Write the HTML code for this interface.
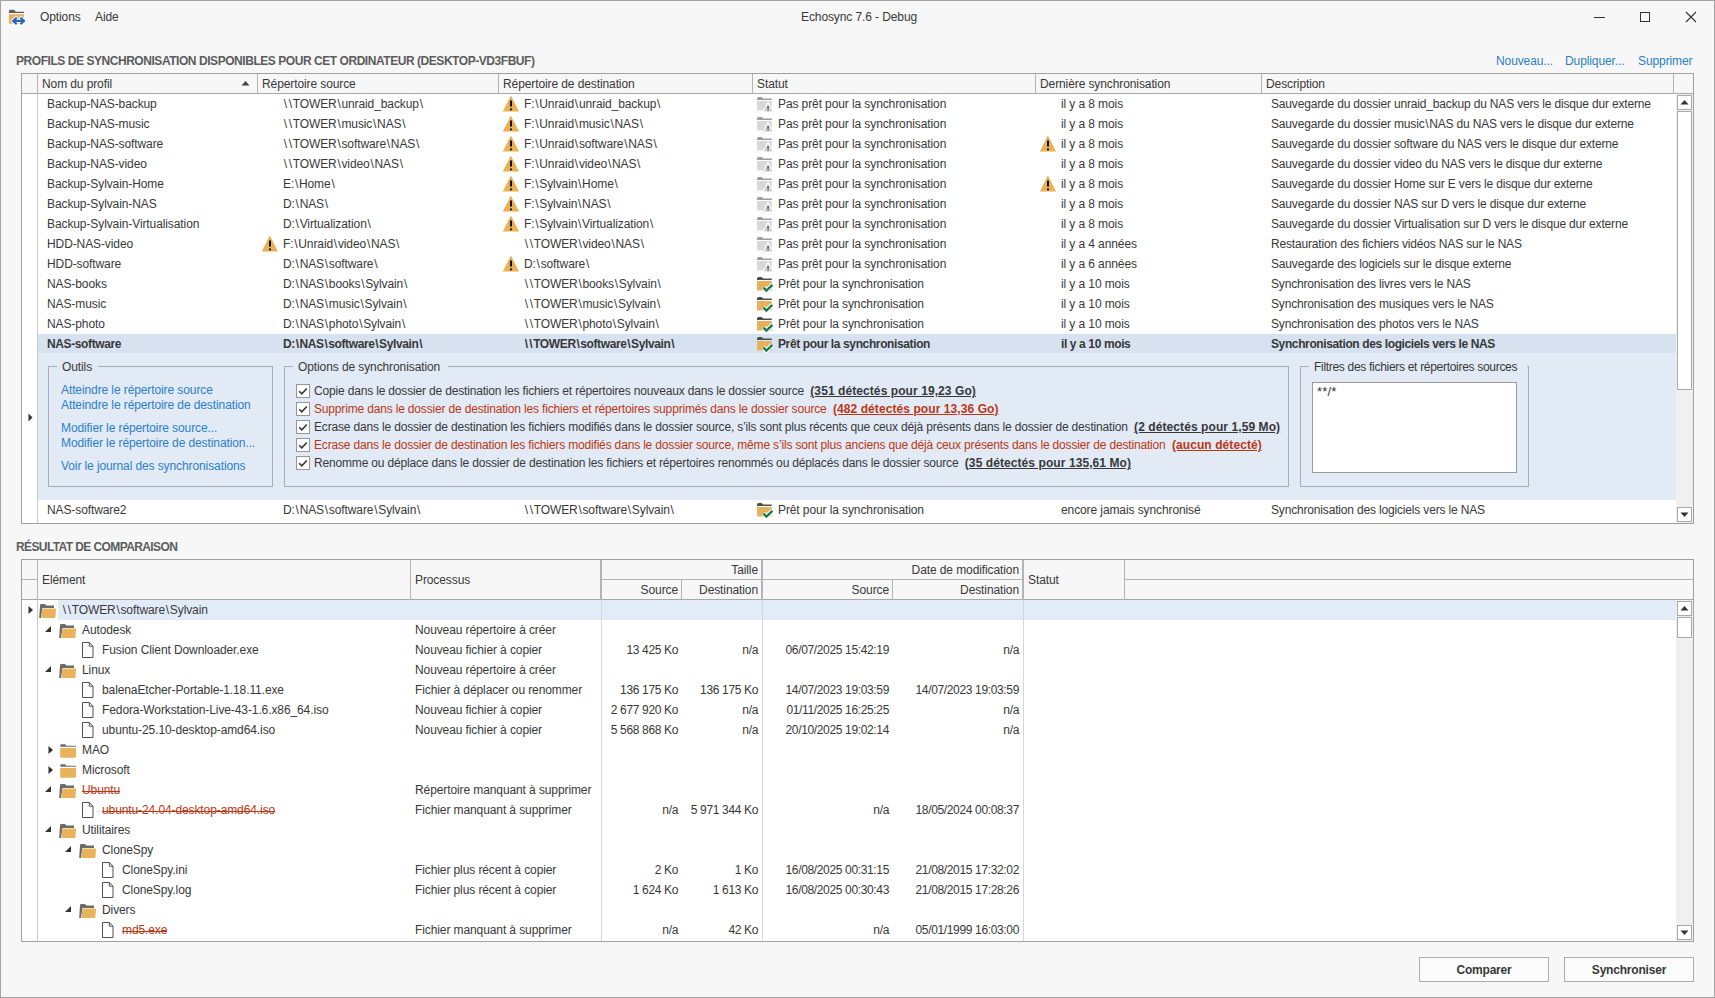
<!DOCTYPE html><html><head><meta charset="utf-8"><style>

html,body{margin:0;padding:0;}
body{width:1715px;height:998px;overflow:hidden;background:#f7f7f7;position:relative;font-family:"Liberation Sans", sans-serif;font-size:12px;color:#383838;}
.t{position:absolute;white-space:nowrap;line-height:20px;height:20px;letter-spacing:-0.1px;}
.r{text-align:right;}
.b{position:absolute;box-sizing:border-box;}
.ic{position:absolute;}
.lk{color:#2a80c6;}
.hd{font-weight:bold;color:#5c5c5c;letter-spacing:-0.45px;}
.hd2{letter-spacing:-0.6px;}
.red{color:#bb3714;}
.bold{font-weight:bold;}
.bs{padding:0 0.8px;}
.desc{letter-spacing:-0.17px;}
.num{letter-spacing:-0.35px;}
.strike{background:linear-gradient(#bb3714,#bb3714) 0 11px/100% 1px no-repeat;}
.ul{text-decoration:underline;font-weight:bold;letter-spacing:0.08px;}

</style></head><body>
<div class="b" style="left:0px;top:0px;width:1715px;height:998px;border:1px solid #a3a3a3;"></div>
<svg class="ic" style="left:8px;top:9px" width="20" height="18" viewBox="0 0 20 18"><path d="M0.9 2.2 Q0.9 0.7 2.4 0.7 h3.4 l2 2 h8.2 v1.3 h-15.1 z" fill="#5e5e5e"/><path d="M0.9 5.2 h15.1 v9.6 h-14.1 q-1 0 -1 -1 z" fill="#e6b25c"/><path d="M8 9.2 L5.3 11.9 L8 14.6 M5.3 11.9 H15.9 M13.2 9.2 L15.9 11.9 L13.2 14.6" fill="none" stroke="#ffffff" stroke-width="4.2" stroke-linecap="round" stroke-linejoin="round"/><path d="M8 9.2 L5.3 11.9 L8 14.6 M5.3 11.9 H15.9 M13.2 9.2 L15.9 11.9 L13.2 14.6" fill="none" stroke="#2763b5" stroke-width="2.1" stroke-linecap="square"/></svg>
<div class="t" style="left:40px;top:7px;">Options</div>
<div class="t" style="left:95px;top:7px;">Aide</div>
<div class="t" style="left:801px;top:7px;">Echosync 7.6 - Debug</div>
<div class="b" style="left:1594px;top:17px;width:11px;height:1px;background:#333;"></div>
<div class="b" style="left:1640px;top:12px;width:10px;height:10px;border:1px solid #333;"></div>
<svg class="ic" style="left:1685px;top:11px" width="12" height="12" viewBox="0 0 12 12"><path d="M1 1 L11 11 M11 1 L1 11" stroke="#333" stroke-width="1.1"/></svg>
<div class="t hd" style="left:16px;top:51px;">PROFILS DE SYNCHRONISATION DISPONIBLES POUR CET ORDINATEUR (DESKTOP-VD3FBUF)</div>
<div class="t lk" style="left:1496px;top:51px;">Nouveau...</div>
<div class="t lk" style="left:1565px;top:51px;">Dupliquer...</div>
<div class="t lk" style="left:1638px;top:51px;">Supprimer</div>
<div class="b" style="left:21px;top:73px;width:1673px;height:451px;border:1px solid #a0a0a0;background:#fff;"></div>
<div class="b" style="left:22px;top:74px;width:1671px;height:20px;background:#f7f7f7;border-bottom:1px solid #a8a8a8;"></div>
<div class="b" style="left:37px;top:74px;width:1px;height:20px;background:#b4b4b4;"></div>
<div class="b" style="left:257px;top:74px;width:1px;height:20px;background:#b4b4b4;"></div>
<div class="b" style="left:498px;top:74px;width:1px;height:20px;background:#b4b4b4;"></div>
<div class="b" style="left:752px;top:74px;width:1px;height:20px;background:#b4b4b4;"></div>
<div class="b" style="left:1035px;top:74px;width:1px;height:20px;background:#b4b4b4;"></div>
<div class="b" style="left:1261px;top:74px;width:1px;height:20px;background:#b4b4b4;"></div>
<div class="b" style="left:1673px;top:74px;width:1px;height:20px;background:#b4b4b4;"></div>
<div class="b" style="left:37px;top:94px;width:1px;height:429px;background:#c8c8c8;"></div>
<div class="t" style="left:42px;top:74px;">Nom du profil</div>
<svg class="ic" style="left:241px;top:80px" width="9" height="6" viewBox="0 0 9 6"><path d="M0.5 5.5 L4.5 1 L8.5 5.5 Z" fill="#444"/></svg>
<div class="t" style="left:262px;top:74px;">Répertoire source</div>
<div class="t" style="left:503px;top:74px;">Répertoire de destination</div>
<div class="t" style="left:757px;top:74px;">Statut</div>
<div class="t" style="left:1040px;top:74px;">Dernière synchronisation</div>
<div class="t" style="left:1266px;top:74px;">Description</div>
<div class="t" style="left:47px;top:94px;">Backup-NAS-backup</div>
<div class="t" style="left:283px;top:94px;"><span class="bs">\</span><span class="bs">\</span>TOWER<span class="bs">\</span>unraid_backup<span class="bs">\</span></div>
<svg class="ic" style="left:502px;top:94px" width="18" height="18" viewBox="0 0 18 18"><path d="M8.8 1.6 L17 17.4 L0.8 17.4 Z" fill="#e9b054"/><rect x="8" y="6.5" width="2" height="6" fill="#111"/><rect x="8" y="14.5" width="2" height="1.8" fill="#111"/></svg>
<div class="t" style="left:524px;top:94px;">F:<span class="bs">\</span>Unraid<span class="bs">\</span>unraid_backup<span class="bs">\</span></div>
<svg class="ic" style="left:756px;top:94px" width="19" height="19" viewBox="0 0 19 19"><path d="M1 4.6 Q1 3 2.6 3 h3 l1.6 1.6 h8.6 v1.3 h-14.8 z" fill="#9c9c9c"/><path d="M1 7 h14.8 v9.4 h-13.6 q-1.2 0 -1.2 -1.2 z" fill="#d8d8d8"/><path d="M12 7.2 L18 18.2 L6 18.2 Z" fill="#ffffff"/><path d="M12 9.4 L16.6 17.5 L7.4 17.5 Z" fill="#d2d2d2"/><rect x="11.3" y="12" width="1.5" height="3" fill="#5a5a5a"/><rect x="11.3" y="15.8" width="1.5" height="1.2" fill="#5a5a5a"/></svg>
<div class="t" style="left:778px;top:94px;">Pas prêt pour la synchronisation</div>
<div class="t" style="left:1061px;top:94px;">il y a 8 mois</div>
<div class="t desc" style="left:1271px;top:94px;">Sauvegarde du dossier unraid_backup du NAS vers le disque dur externe</div>
<div class="t" style="left:47px;top:114px;">Backup-NAS-music</div>
<div class="t" style="left:283px;top:114px;"><span class="bs">\</span><span class="bs">\</span>TOWER<span class="bs">\</span>music<span class="bs">\</span>NAS<span class="bs">\</span></div>
<svg class="ic" style="left:502px;top:114px" width="18" height="18" viewBox="0 0 18 18"><path d="M8.8 1.6 L17 17.4 L0.8 17.4 Z" fill="#e9b054"/><rect x="8" y="6.5" width="2" height="6" fill="#111"/><rect x="8" y="14.5" width="2" height="1.8" fill="#111"/></svg>
<div class="t" style="left:524px;top:114px;">F:<span class="bs">\</span>Unraid<span class="bs">\</span>music<span class="bs">\</span>NAS<span class="bs">\</span></div>
<svg class="ic" style="left:756px;top:114px" width="19" height="19" viewBox="0 0 19 19"><path d="M1 4.6 Q1 3 2.6 3 h3 l1.6 1.6 h8.6 v1.3 h-14.8 z" fill="#9c9c9c"/><path d="M1 7 h14.8 v9.4 h-13.6 q-1.2 0 -1.2 -1.2 z" fill="#d8d8d8"/><path d="M12 7.2 L18 18.2 L6 18.2 Z" fill="#ffffff"/><path d="M12 9.4 L16.6 17.5 L7.4 17.5 Z" fill="#d2d2d2"/><rect x="11.3" y="12" width="1.5" height="3" fill="#5a5a5a"/><rect x="11.3" y="15.8" width="1.5" height="1.2" fill="#5a5a5a"/></svg>
<div class="t" style="left:778px;top:114px;">Pas prêt pour la synchronisation</div>
<div class="t" style="left:1061px;top:114px;">il y a 8 mois</div>
<div class="t desc" style="left:1271px;top:114px;">Sauvegarde du dossier music<span class="bs">\</span>NAS du NAS vers le disque dur externe</div>
<div class="t" style="left:47px;top:134px;">Backup-NAS-software</div>
<div class="t" style="left:283px;top:134px;"><span class="bs">\</span><span class="bs">\</span>TOWER<span class="bs">\</span>software<span class="bs">\</span>NAS<span class="bs">\</span></div>
<svg class="ic" style="left:502px;top:134px" width="18" height="18" viewBox="0 0 18 18"><path d="M8.8 1.6 L17 17.4 L0.8 17.4 Z" fill="#e9b054"/><rect x="8" y="6.5" width="2" height="6" fill="#111"/><rect x="8" y="14.5" width="2" height="1.8" fill="#111"/></svg>
<div class="t" style="left:524px;top:134px;">F:<span class="bs">\</span>Unraid<span class="bs">\</span>software<span class="bs">\</span>NAS<span class="bs">\</span></div>
<svg class="ic" style="left:756px;top:134px" width="19" height="19" viewBox="0 0 19 19"><path d="M1 4.6 Q1 3 2.6 3 h3 l1.6 1.6 h8.6 v1.3 h-14.8 z" fill="#9c9c9c"/><path d="M1 7 h14.8 v9.4 h-13.6 q-1.2 0 -1.2 -1.2 z" fill="#d8d8d8"/><path d="M12 7.2 L18 18.2 L6 18.2 Z" fill="#ffffff"/><path d="M12 9.4 L16.6 17.5 L7.4 17.5 Z" fill="#d2d2d2"/><rect x="11.3" y="12" width="1.5" height="3" fill="#5a5a5a"/><rect x="11.3" y="15.8" width="1.5" height="1.2" fill="#5a5a5a"/></svg>
<div class="t" style="left:778px;top:134px;">Pas prêt pour la synchronisation</div>
<svg class="ic" style="left:1039px;top:134px" width="18" height="18" viewBox="0 0 18 18"><path d="M8.8 1.6 L17 17.4 L0.8 17.4 Z" fill="#e9b054"/><rect x="8" y="6.5" width="2" height="6" fill="#111"/><rect x="8" y="14.5" width="2" height="1.8" fill="#111"/></svg>
<div class="t" style="left:1061px;top:134px;">il y a 8 mois</div>
<div class="t desc" style="left:1271px;top:134px;">Sauvegarde du dossier software du NAS vers le disque dur externe</div>
<div class="t" style="left:47px;top:154px;">Backup-NAS-video</div>
<div class="t" style="left:283px;top:154px;"><span class="bs">\</span><span class="bs">\</span>TOWER<span class="bs">\</span>video<span class="bs">\</span>NAS<span class="bs">\</span></div>
<svg class="ic" style="left:502px;top:154px" width="18" height="18" viewBox="0 0 18 18"><path d="M8.8 1.6 L17 17.4 L0.8 17.4 Z" fill="#e9b054"/><rect x="8" y="6.5" width="2" height="6" fill="#111"/><rect x="8" y="14.5" width="2" height="1.8" fill="#111"/></svg>
<div class="t" style="left:524px;top:154px;">F:<span class="bs">\</span>Unraid<span class="bs">\</span>video<span class="bs">\</span>NAS<span class="bs">\</span></div>
<svg class="ic" style="left:756px;top:154px" width="19" height="19" viewBox="0 0 19 19"><path d="M1 4.6 Q1 3 2.6 3 h3 l1.6 1.6 h8.6 v1.3 h-14.8 z" fill="#9c9c9c"/><path d="M1 7 h14.8 v9.4 h-13.6 q-1.2 0 -1.2 -1.2 z" fill="#d8d8d8"/><path d="M12 7.2 L18 18.2 L6 18.2 Z" fill="#ffffff"/><path d="M12 9.4 L16.6 17.5 L7.4 17.5 Z" fill="#d2d2d2"/><rect x="11.3" y="12" width="1.5" height="3" fill="#5a5a5a"/><rect x="11.3" y="15.8" width="1.5" height="1.2" fill="#5a5a5a"/></svg>
<div class="t" style="left:778px;top:154px;">Pas prêt pour la synchronisation</div>
<div class="t" style="left:1061px;top:154px;">il y a 8 mois</div>
<div class="t desc" style="left:1271px;top:154px;">Sauvegarde du dossier video du NAS vers le disque dur externe</div>
<div class="t" style="left:47px;top:174px;">Backup-Sylvain-Home</div>
<div class="t" style="left:283px;top:174px;">E:<span class="bs">\</span>Home<span class="bs">\</span></div>
<svg class="ic" style="left:502px;top:174px" width="18" height="18" viewBox="0 0 18 18"><path d="M8.8 1.6 L17 17.4 L0.8 17.4 Z" fill="#e9b054"/><rect x="8" y="6.5" width="2" height="6" fill="#111"/><rect x="8" y="14.5" width="2" height="1.8" fill="#111"/></svg>
<div class="t" style="left:524px;top:174px;">F:<span class="bs">\</span>Sylvain<span class="bs">\</span>Home<span class="bs">\</span></div>
<svg class="ic" style="left:756px;top:174px" width="19" height="19" viewBox="0 0 19 19"><path d="M1 4.6 Q1 3 2.6 3 h3 l1.6 1.6 h8.6 v1.3 h-14.8 z" fill="#9c9c9c"/><path d="M1 7 h14.8 v9.4 h-13.6 q-1.2 0 -1.2 -1.2 z" fill="#d8d8d8"/><path d="M12 7.2 L18 18.2 L6 18.2 Z" fill="#ffffff"/><path d="M12 9.4 L16.6 17.5 L7.4 17.5 Z" fill="#d2d2d2"/><rect x="11.3" y="12" width="1.5" height="3" fill="#5a5a5a"/><rect x="11.3" y="15.8" width="1.5" height="1.2" fill="#5a5a5a"/></svg>
<div class="t" style="left:778px;top:174px;">Pas prêt pour la synchronisation</div>
<svg class="ic" style="left:1039px;top:174px" width="18" height="18" viewBox="0 0 18 18"><path d="M8.8 1.6 L17 17.4 L0.8 17.4 Z" fill="#e9b054"/><rect x="8" y="6.5" width="2" height="6" fill="#111"/><rect x="8" y="14.5" width="2" height="1.8" fill="#111"/></svg>
<div class="t" style="left:1061px;top:174px;">il y a 8 mois</div>
<div class="t desc" style="left:1271px;top:174px;">Sauvegarde du dossier Home sur E vers le disque dur externe</div>
<div class="t" style="left:47px;top:194px;">Backup-Sylvain-NAS</div>
<div class="t" style="left:283px;top:194px;">D:<span class="bs">\</span>NAS<span class="bs">\</span></div>
<svg class="ic" style="left:502px;top:194px" width="18" height="18" viewBox="0 0 18 18"><path d="M8.8 1.6 L17 17.4 L0.8 17.4 Z" fill="#e9b054"/><rect x="8" y="6.5" width="2" height="6" fill="#111"/><rect x="8" y="14.5" width="2" height="1.8" fill="#111"/></svg>
<div class="t" style="left:524px;top:194px;">F:<span class="bs">\</span>Sylvain<span class="bs">\</span>NAS<span class="bs">\</span></div>
<svg class="ic" style="left:756px;top:194px" width="19" height="19" viewBox="0 0 19 19"><path d="M1 4.6 Q1 3 2.6 3 h3 l1.6 1.6 h8.6 v1.3 h-14.8 z" fill="#9c9c9c"/><path d="M1 7 h14.8 v9.4 h-13.6 q-1.2 0 -1.2 -1.2 z" fill="#d8d8d8"/><path d="M12 7.2 L18 18.2 L6 18.2 Z" fill="#ffffff"/><path d="M12 9.4 L16.6 17.5 L7.4 17.5 Z" fill="#d2d2d2"/><rect x="11.3" y="12" width="1.5" height="3" fill="#5a5a5a"/><rect x="11.3" y="15.8" width="1.5" height="1.2" fill="#5a5a5a"/></svg>
<div class="t" style="left:778px;top:194px;">Pas prêt pour la synchronisation</div>
<div class="t" style="left:1061px;top:194px;">il y a 8 mois</div>
<div class="t desc" style="left:1271px;top:194px;">Sauvegarde du dossier NAS sur D vers le disque dur externe</div>
<div class="t" style="left:47px;top:214px;">Backup-Sylvain-Virtualisation</div>
<div class="t" style="left:283px;top:214px;">D:<span class="bs">\</span>Virtualization<span class="bs">\</span></div>
<svg class="ic" style="left:502px;top:214px" width="18" height="18" viewBox="0 0 18 18"><path d="M8.8 1.6 L17 17.4 L0.8 17.4 Z" fill="#e9b054"/><rect x="8" y="6.5" width="2" height="6" fill="#111"/><rect x="8" y="14.5" width="2" height="1.8" fill="#111"/></svg>
<div class="t" style="left:524px;top:214px;">F:<span class="bs">\</span>Sylvain<span class="bs">\</span>Virtualization<span class="bs">\</span></div>
<svg class="ic" style="left:756px;top:214px" width="19" height="19" viewBox="0 0 19 19"><path d="M1 4.6 Q1 3 2.6 3 h3 l1.6 1.6 h8.6 v1.3 h-14.8 z" fill="#9c9c9c"/><path d="M1 7 h14.8 v9.4 h-13.6 q-1.2 0 -1.2 -1.2 z" fill="#d8d8d8"/><path d="M12 7.2 L18 18.2 L6 18.2 Z" fill="#ffffff"/><path d="M12 9.4 L16.6 17.5 L7.4 17.5 Z" fill="#d2d2d2"/><rect x="11.3" y="12" width="1.5" height="3" fill="#5a5a5a"/><rect x="11.3" y="15.8" width="1.5" height="1.2" fill="#5a5a5a"/></svg>
<div class="t" style="left:778px;top:214px;">Pas prêt pour la synchronisation</div>
<div class="t" style="left:1061px;top:214px;">il y a 8 mois</div>
<div class="t desc" style="left:1271px;top:214px;">Sauvegarde du dossier Virtualisation sur D vers le disque dur externe</div>
<div class="t" style="left:47px;top:234px;">HDD-NAS-video</div>
<svg class="ic" style="left:261px;top:234px" width="18" height="18" viewBox="0 0 18 18"><path d="M8.8 1.6 L17 17.4 L0.8 17.4 Z" fill="#e9b054"/><rect x="8" y="6.5" width="2" height="6" fill="#111"/><rect x="8" y="14.5" width="2" height="1.8" fill="#111"/></svg>
<div class="t" style="left:283px;top:234px;">F:<span class="bs">\</span>Unraid<span class="bs">\</span>video<span class="bs">\</span>NAS<span class="bs">\</span></div>
<div class="t" style="left:524px;top:234px;"><span class="bs">\</span><span class="bs">\</span>TOWER<span class="bs">\</span>video<span class="bs">\</span>NAS<span class="bs">\</span></div>
<svg class="ic" style="left:756px;top:234px" width="19" height="19" viewBox="0 0 19 19"><path d="M1 4.6 Q1 3 2.6 3 h3 l1.6 1.6 h8.6 v1.3 h-14.8 z" fill="#9c9c9c"/><path d="M1 7 h14.8 v9.4 h-13.6 q-1.2 0 -1.2 -1.2 z" fill="#d8d8d8"/><path d="M12 7.2 L18 18.2 L6 18.2 Z" fill="#ffffff"/><path d="M12 9.4 L16.6 17.5 L7.4 17.5 Z" fill="#d2d2d2"/><rect x="11.3" y="12" width="1.5" height="3" fill="#5a5a5a"/><rect x="11.3" y="15.8" width="1.5" height="1.2" fill="#5a5a5a"/></svg>
<div class="t" style="left:778px;top:234px;">Pas prêt pour la synchronisation</div>
<div class="t" style="left:1061px;top:234px;">il y a 4 années</div>
<div class="t desc" style="left:1271px;top:234px;">Restauration des fichiers vidéos NAS sur le NAS</div>
<div class="t" style="left:47px;top:254px;">HDD-software</div>
<div class="t" style="left:283px;top:254px;">D:<span class="bs">\</span>NAS<span class="bs">\</span>software<span class="bs">\</span></div>
<svg class="ic" style="left:502px;top:254px" width="18" height="18" viewBox="0 0 18 18"><path d="M8.8 1.6 L17 17.4 L0.8 17.4 Z" fill="#e9b054"/><rect x="8" y="6.5" width="2" height="6" fill="#111"/><rect x="8" y="14.5" width="2" height="1.8" fill="#111"/></svg>
<div class="t" style="left:524px;top:254px;">D:<span class="bs">\</span>software<span class="bs">\</span></div>
<svg class="ic" style="left:756px;top:254px" width="19" height="19" viewBox="0 0 19 19"><path d="M1 4.6 Q1 3 2.6 3 h3 l1.6 1.6 h8.6 v1.3 h-14.8 z" fill="#9c9c9c"/><path d="M1 7 h14.8 v9.4 h-13.6 q-1.2 0 -1.2 -1.2 z" fill="#d8d8d8"/><path d="M12 7.2 L18 18.2 L6 18.2 Z" fill="#ffffff"/><path d="M12 9.4 L16.6 17.5 L7.4 17.5 Z" fill="#d2d2d2"/><rect x="11.3" y="12" width="1.5" height="3" fill="#5a5a5a"/><rect x="11.3" y="15.8" width="1.5" height="1.2" fill="#5a5a5a"/></svg>
<div class="t" style="left:778px;top:254px;">Pas prêt pour la synchronisation</div>
<div class="t" style="left:1061px;top:254px;">il y a 6 années</div>
<div class="t desc" style="left:1271px;top:254px;">Sauvegarde des logiciels sur le disque externe</div>
<div class="t" style="left:47px;top:274px;">NAS-books</div>
<div class="t" style="left:283px;top:274px;">D:<span class="bs">\</span>NAS<span class="bs">\</span>books<span class="bs">\</span>Sylvain<span class="bs">\</span></div>
<div class="t" style="left:524px;top:274px;"><span class="bs">\</span><span class="bs">\</span>TOWER<span class="bs">\</span>books<span class="bs">\</span>Sylvain<span class="bs">\</span></div>
<svg class="ic" style="left:756px;top:274px" width="19" height="19" viewBox="0 0 19 19"><path d="M1 4.6 Q1 3 2.6 3 h3 l1.6 1.6 h8.6 v1.3 h-14.8 z" fill="#4e4e4e"/><path d="M1 7 h14.8 v9.4 h-13.6 q-1.2 0 -1.2 -1.2 z" fill="#e8b15c"/><path d="M7.4 13.6 L10.4 16.6 L16.4 10.8" fill="none" stroke="#fff" stroke-width="4.4"/><path d="M7.4 13.6 L10.4 16.6 L16.4 10.8" fill="none" stroke="#1b7c4b" stroke-width="2.3"/></svg>
<div class="t" style="left:778px;top:274px;">Prêt pour la synchronisation</div>
<div class="t" style="left:1061px;top:274px;">il y a 10 mois</div>
<div class="t desc" style="left:1271px;top:274px;">Synchronisation des livres vers le NAS</div>
<div class="t" style="left:47px;top:294px;">NAS-music</div>
<div class="t" style="left:283px;top:294px;">D:<span class="bs">\</span>NAS<span class="bs">\</span>music<span class="bs">\</span>Sylvain<span class="bs">\</span></div>
<div class="t" style="left:524px;top:294px;"><span class="bs">\</span><span class="bs">\</span>TOWER<span class="bs">\</span>music<span class="bs">\</span>Sylvain<span class="bs">\</span></div>
<svg class="ic" style="left:756px;top:294px" width="19" height="19" viewBox="0 0 19 19"><path d="M1 4.6 Q1 3 2.6 3 h3 l1.6 1.6 h8.6 v1.3 h-14.8 z" fill="#4e4e4e"/><path d="M1 7 h14.8 v9.4 h-13.6 q-1.2 0 -1.2 -1.2 z" fill="#e8b15c"/><path d="M7.4 13.6 L10.4 16.6 L16.4 10.8" fill="none" stroke="#fff" stroke-width="4.4"/><path d="M7.4 13.6 L10.4 16.6 L16.4 10.8" fill="none" stroke="#1b7c4b" stroke-width="2.3"/></svg>
<div class="t" style="left:778px;top:294px;">Prêt pour la synchronisation</div>
<div class="t" style="left:1061px;top:294px;">il y a 10 mois</div>
<div class="t desc" style="left:1271px;top:294px;">Synchronisation des musiques vers le NAS</div>
<div class="t" style="left:47px;top:314px;">NAS-photo</div>
<div class="t" style="left:283px;top:314px;">D:<span class="bs">\</span>NAS<span class="bs">\</span>photo<span class="bs">\</span>Sylvain<span class="bs">\</span></div>
<div class="t" style="left:524px;top:314px;"><span class="bs">\</span><span class="bs">\</span>TOWER<span class="bs">\</span>photo<span class="bs">\</span>Sylvain<span class="bs">\</span></div>
<svg class="ic" style="left:756px;top:314px" width="19" height="19" viewBox="0 0 19 19"><path d="M1 4.6 Q1 3 2.6 3 h3 l1.6 1.6 h8.6 v1.3 h-14.8 z" fill="#4e4e4e"/><path d="M1 7 h14.8 v9.4 h-13.6 q-1.2 0 -1.2 -1.2 z" fill="#e8b15c"/><path d="M7.4 13.6 L10.4 16.6 L16.4 10.8" fill="none" stroke="#fff" stroke-width="4.4"/><path d="M7.4 13.6 L10.4 16.6 L16.4 10.8" fill="none" stroke="#1b7c4b" stroke-width="2.3"/></svg>
<div class="t" style="left:778px;top:314px;">Prêt pour la synchronisation</div>
<div class="t" style="left:1061px;top:314px;">il y a 10 mois</div>
<div class="t desc" style="left:1271px;top:314px;">Synchronisation des photos vers le NAS</div>
<div class="b" style="left:38px;top:334px;width:1638px;height:19px;background:#d6e2f0;"></div>
<div class="t bold" style="left:47px;top:334px;letter-spacing:-0.38px;">NAS-software</div>
<div class="t bold" style="left:283px;top:334px;letter-spacing:-0.38px;">D:<span class="bs">\</span>NAS<span class="bs">\</span>software<span class="bs">\</span>Sylvain<span class="bs">\</span></div>
<div class="t bold" style="left:524px;top:334px;letter-spacing:-0.38px;"><span class="bs">\</span><span class="bs">\</span>TOWER<span class="bs">\</span>software<span class="bs">\</span>Sylvain<span class="bs">\</span></div>
<svg class="ic" style="left:756px;top:334px" width="19" height="19" viewBox="0 0 19 19"><path d="M1 4.6 Q1 3 2.6 3 h3 l1.6 1.6 h8.6 v1.3 h-14.8 z" fill="#4e4e4e"/><path d="M1 7 h14.8 v9.4 h-13.6 q-1.2 0 -1.2 -1.2 z" fill="#e8b15c"/><path d="M7.4 13.6 L10.4 16.6 L16.4 10.8" fill="none" stroke="#fff" stroke-width="4.4"/><path d="M7.4 13.6 L10.4 16.6 L16.4 10.8" fill="none" stroke="#1b7c4b" stroke-width="2.3"/></svg>
<div class="t bold" style="left:778px;top:334px;letter-spacing:-0.38px;">Prêt pour la synchronisation</div>
<div class="t bold" style="left:1061px;top:334px;letter-spacing:-0.38px;">il y a 10 mois</div>
<div class="t bold desc" style="left:1271px;top:334px;letter-spacing:-0.38px;">Synchronisation des logiciels vers le NAS</div>
<div class="b" style="left:38px;top:353px;width:1638px;height:147px;background:#e2eaf6;"></div>
<svg class="ic" style="left:27.7px;top:413px" width="5" height="9" viewBox="0 0 5 9"><path d="M0.5 0.5 L4.5 4.5 L0.5 8.5 Z" fill="#333"/></svg>
<div class="b" style="left:48px;top:366px;width:225px;height:121px;border:1px solid #a4adb8;"></div>
<div class="b" style="left:57px;top:365px;width:41px;height:3px;background:#e3ebf6;"></div>
<div class="t" style="left:62px;top:357px;width:31px;">Outils</div>
<div class="b" style="left:284px;top:366px;width:1005px;height:121px;border:1px solid #a4adb8;"></div>
<div class="b" style="left:293px;top:365px;width:155px;height:3px;background:#e3ebf6;"></div>
<div class="t" style="left:298px;top:357px;width:145px;">Options de synchronisation</div>
<div class="b" style="left:1300px;top:366px;width:229px;height:121px;border:1px solid #a4adb8;"></div>
<div class="b" style="left:1309px;top:365px;width:218px;height:3px;background:#e3ebf6;"></div>
<div class="t" style="left:1314px;top:357px;width:208px;letter-spacing:-0.3px;">Filtres des fichiers et répertoires sources</div>
<div class="t lk" style="left:61px;top:380px;">Atteindre le répertoire source</div>
<div class="t lk" style="left:61px;top:395px;">Atteindre le répertoire de destination</div>
<div class="t lk" style="left:61px;top:418px;">Modifier le répertoire source...</div>
<div class="t lk" style="left:61px;top:433px;">Modifier le répertoire de destination...</div>
<div class="t lk" style="left:61px;top:456px;">Voir le journal des synchronisations</div>
<div class="b" style="left:296px;top:384px;width:14px;height:14px;border:1px solid #969696;background:#fff;"></div>
<svg class="ic" style="left:297px;top:385px" width="12" height="12" viewBox="0 0 12 12"><path d="M2.2 6.2 L4.8 8.8 L9.8 3.4" fill="none" stroke="#333" stroke-width="1.5"/></svg>
<div class="t" style="left:314px;top:381px;letter-spacing:-0.17px">Copie dans le dossier de destination les fichiers et répertoires nouveaux dans le dossier source&nbsp;&nbsp;<span class="ul">(351 détectés pour 19,23 Go)</span></div>
<div class="b" style="left:296px;top:402px;width:14px;height:14px;border:1px solid #969696;background:#fff;"></div>
<svg class="ic" style="left:297px;top:403px" width="12" height="12" viewBox="0 0 12 12"><path d="M2.2 6.2 L4.8 8.8 L9.8 3.4" fill="none" stroke="#333" stroke-width="1.5"/></svg>
<div class="t red" style="left:314px;top:399px;letter-spacing:-0.17px">Supprime dans le dossier de destination les fichiers et répertoires supprimés dans le dossier source&nbsp;&nbsp;<span class="ul">(482 détectés pour 13,36 Go)</span></div>
<div class="b" style="left:296px;top:420px;width:14px;height:14px;border:1px solid #969696;background:#fff;"></div>
<svg class="ic" style="left:297px;top:421px" width="12" height="12" viewBox="0 0 12 12"><path d="M2.2 6.2 L4.8 8.8 L9.8 3.4" fill="none" stroke="#333" stroke-width="1.5"/></svg>
<div class="t" style="left:314px;top:417px;letter-spacing:-0.17px">Ecrase dans le dossier de destination les fichiers modifiés dans le dossier source, s’ils sont plus récents que ceux déjà présents dans le dossier de destination&nbsp;&nbsp;<span class="ul">(2 détectés pour 1,59 Mo)</span></div>
<div class="b" style="left:296px;top:438px;width:14px;height:14px;border:1px solid #969696;background:#fff;"></div>
<svg class="ic" style="left:297px;top:439px" width="12" height="12" viewBox="0 0 12 12"><path d="M2.2 6.2 L4.8 8.8 L9.8 3.4" fill="none" stroke="#333" stroke-width="1.5"/></svg>
<div class="t red" style="left:314px;top:435px;letter-spacing:-0.17px">Ecrase dans le dossier de destination les fichiers modifiés dans le dossier source, même s’ils sont plus anciens que déjà ceux présents dans le dossier de destination&nbsp;&nbsp;<span class="ul">(aucun détecté)</span></div>
<div class="b" style="left:296px;top:456px;width:14px;height:14px;border:1px solid #969696;background:#fff;"></div>
<svg class="ic" style="left:297px;top:457px" width="12" height="12" viewBox="0 0 12 12"><path d="M2.2 6.2 L4.8 8.8 L9.8 3.4" fill="none" stroke="#333" stroke-width="1.5"/></svg>
<div class="t" style="left:314px;top:453px;letter-spacing:-0.17px">Renomme ou déplace dans le dossier de destination les fichiers et répertoires renommés ou déplacés dans le dossier source&nbsp;&nbsp;<span class="ul">(35 détectés pour 135,61 Mo)</span></div>
<div class="b" style="left:1312px;top:382px;width:205px;height:91px;border:1px solid #9a9a9a;background:#fff;"></div>
<div class="t" style="left:1317px;top:382px;font-size:13px;letter-spacing:0.2px;">**/*</div>
<div class="t" style="left:47px;top:500px;">NAS-software2</div>
<div class="t" style="left:283px;top:500px;">D:<span class="bs">\</span>NAS<span class="bs">\</span>software<span class="bs">\</span>Sylvain<span class="bs">\</span></div>
<div class="t" style="left:524px;top:500px;"><span class="bs">\</span><span class="bs">\</span>TOWER<span class="bs">\</span>software<span class="bs">\</span>Sylvain<span class="bs">\</span></div>
<svg class="ic" style="left:756px;top:500px" width="19" height="19" viewBox="0 0 19 19"><path d="M1 4.6 Q1 3 2.6 3 h3 l1.6 1.6 h8.6 v1.3 h-14.8 z" fill="#4e4e4e"/><path d="M1 7 h14.8 v9.4 h-13.6 q-1.2 0 -1.2 -1.2 z" fill="#e8b15c"/><path d="M7.4 13.6 L10.4 16.6 L16.4 10.8" fill="none" stroke="#fff" stroke-width="4.4"/><path d="M7.4 13.6 L10.4 16.6 L16.4 10.8" fill="none" stroke="#1b7c4b" stroke-width="2.3"/></svg>
<div class="t" style="left:778px;top:500px;">Prêt pour la synchronisation</div>
<div class="t" style="left:1061px;top:500px;">encore jamais synchronisé</div>
<div class="t desc" style="left:1271px;top:500px;">Synchronisation des logiciels vers le NAS</div>
<div class="b" style="left:1676px;top:94px;width:17px;height:429px;background:#f0f0f0;"></div>
<div class="b" style="left:1677px;top:95px;width:15px;height:15px;border:1px solid #a8a8a8;background:#fff;"></div>
<svg class="ic" style="left:1680px;top:99px" width="9" height="6" viewBox="0 0 9 6"><path d="M0.5 5.5 L4.5 1 L8.5 5.5 Z" fill="#333"/></svg>
<div class="b" style="left:1677px;top:111px;width:15px;height:279px;border:1px solid #a8a8a8;background:#fff;"></div>
<div class="b" style="left:1677px;top:507px;width:15px;height:15px;border:1px solid #a8a8a8;background:#fff;"></div>
<svg class="ic" style="left:1680px;top:512px" width="9" height="6" viewBox="0 0 9 6"><path d="M0.5 0.5 L4.5 5 L8.5 0.5 Z" fill="#333"/></svg>
<div class="t hd hd2" style="left:16px;top:537px;">RÉSULTAT DE COMPARAISON</div>
<div class="b" style="left:21px;top:559px;width:1673px;height:383px;border:1px solid #a0a0a0;background:#fff;"></div>
<div class="b" style="left:22px;top:560px;width:1671px;height:40px;background:#f7f7f7;border-bottom:1px solid #a8a8a8;"></div>
<div class="b" style="left:37px;top:560px;width:1px;height:40px;background:#b4b4b4;"></div>
<div class="b" style="left:410px;top:560px;width:1px;height:40px;background:#b4b4b4;"></div>
<div class="b" style="left:1124px;top:560px;width:1px;height:40px;background:#b4b4b4;"></div>
<div class="b" style="left:600px;top:560px;width:2px;height:40px;background:#b4b4b4;"></div>
<div class="b" style="left:761px;top:560px;width:2px;height:40px;background:#b4b4b4;"></div>
<div class="b" style="left:1022px;top:560px;width:2px;height:40px;background:#b4b4b4;"></div>
<div class="b" style="left:22px;top:579px;width:15px;height:1px;background:#b4b4b4;"></div>
<div class="b" style="left:601px;top:579px;width:422px;height:1px;background:#b4b4b4;"></div>
<div class="b" style="left:1124px;top:579px;width:569px;height:1px;background:#b4b4b4;"></div>
<div class="b" style="left:681px;top:580px;width:1px;height:20px;background:#b4b4b4;"></div>
<div class="b" style="left:892px;top:580px;width:1px;height:20px;background:#b4b4b4;"></div>
<div class="t" style="left:42px;top:570px;">Elément</div>
<div class="t" style="left:415px;top:570px;">Processus</div>
<div class="t r" style="right:957px;top:560px;">Taille</div>
<div class="t r" style="right:1037px;top:580px;">Source</div>
<div class="t r" style="right:957px;top:580px;">Destination</div>
<div class="t r" style="right:696px;top:560px;">Date de modification</div>
<div class="t r" style="right:826px;top:580px;">Source</div>
<div class="t r" style="right:696px;top:580px;">Destination</div>
<div class="t" style="left:1028px;top:570px;">Statut</div>
<div class="b" style="left:58px;top:600px;width:1618px;height:20px;background:#e2ecf8;"></div>
<div class="b" style="left:37px;top:600px;width:1px;height:341px;background:#c8c8c8;"></div>
<div class="b" style="left:601px;top:600px;width:1px;height:341px;background:#d6d6d6;"></div>
<div class="b" style="left:762px;top:600px;width:1px;height:341px;background:#d6d6d6;"></div>
<div class="b" style="left:1023px;top:600px;width:1px;height:341px;background:#d6d6d6;"></div>
<svg class="ic" style="left:28px;top:605px" width="6" height="10" viewBox="0 0 6 10"><path d="M0.5 1 L5 5 L0.5 9 Z" fill="#333"/></svg>
<svg class="ic" style="left:39px;top:603px" width="18" height="16" viewBox="0 0 18 16"><path d="M1 2.2 Q1 1 2.2 1 h3.6 l1.6 1.6 h7.6 v2.6 h-11.6 l-1.4 9.8 h-1.8 z" fill="#6b6b6b"/><path d="M3.6 5.6 h13.6 l-1 9.4 h-13.8 z" fill="#e8b35a"/><path d="M3.6 5.6 h13.6" stroke="#f6e2b8" stroke-width="0.8"/></svg>
<div class="t" style="left:62px;top:600px;"><span class="bs">\</span><span class="bs">\</span>TOWER<span class="bs">\</span>software<span class="bs">\</span>Sylvain</div>
<svg class="ic" style="left:44px;top:625px" width="8" height="8" viewBox="0 0 8 8"><path d="M7 1 L7 7 L1 7 Z" fill="#333"/></svg>
<svg class="ic" style="left:59px;top:623px" width="18" height="16" viewBox="0 0 18 16"><path d="M1 2.2 Q1 1 2.2 1 h3.6 l1.6 1.6 h7.6 v2.6 h-11.6 l-1.4 9.8 h-1.8 z" fill="#6b6b6b"/><path d="M3.6 5.6 h13.6 l-1 9.4 h-13.8 z" fill="#e8b35a"/><path d="M3.6 5.6 h13.6" stroke="#f6e2b8" stroke-width="0.8"/></svg>
<div class="t" style="left:82px;top:620px;">Autodesk</div>
<div class="t" style="left:415px;top:620px;">Nouveau répertoire à créer</div>
<svg class="ic" style="left:81px;top:641px" width="14" height="18" viewBox="0 0 14 18"><path d="M1.5 1.5 h6.8 l3.7 3.7 v11.3 h-10.5 z" fill="#fff" stroke="#505050" stroke-width="1"/><path d="M8.3 1.5 v3.7 h3.7" fill="none" stroke="#505050" stroke-width="1"/></svg>
<div class="t" style="left:102px;top:640px;">Fusion Client Downloader.exe</div>
<div class="t" style="left:415px;top:640px;">Nouveau fichier à copier</div>
<div class="t num r" style="right:1037px;top:640px;">13 425 Ko</div>
<div class="t num r" style="right:957px;top:640px;">n/a</div>
<div class="t num r" style="right:826px;top:640px;">06/07/2025 15:42:19</div>
<div class="t num r" style="right:696px;top:640px;">n/a</div>
<svg class="ic" style="left:44px;top:665px" width="8" height="8" viewBox="0 0 8 8"><path d="M7 1 L7 7 L1 7 Z" fill="#333"/></svg>
<svg class="ic" style="left:59px;top:663px" width="18" height="16" viewBox="0 0 18 16"><path d="M1 2.2 Q1 1 2.2 1 h3.6 l1.6 1.6 h7.6 v2.6 h-11.6 l-1.4 9.8 h-1.8 z" fill="#6b6b6b"/><path d="M3.6 5.6 h13.6 l-1 9.4 h-13.8 z" fill="#e8b35a"/><path d="M3.6 5.6 h13.6" stroke="#f6e2b8" stroke-width="0.8"/></svg>
<div class="t" style="left:82px;top:660px;">Linux</div>
<div class="t" style="left:415px;top:660px;">Nouveau répertoire à créer</div>
<svg class="ic" style="left:81px;top:681px" width="14" height="18" viewBox="0 0 14 18"><path d="M1.5 1.5 h6.8 l3.7 3.7 v11.3 h-10.5 z" fill="#fff" stroke="#505050" stroke-width="1"/><path d="M8.3 1.5 v3.7 h3.7" fill="none" stroke="#505050" stroke-width="1"/></svg>
<div class="t" style="left:102px;top:680px;">balenaEtcher-Portable-1.18.11.exe</div>
<div class="t" style="left:415px;top:680px;">Fichier à déplacer ou renommer</div>
<div class="t num r" style="right:1037px;top:680px;">136 175 Ko</div>
<div class="t num r" style="right:957px;top:680px;">136 175 Ko</div>
<div class="t num r" style="right:826px;top:680px;">14/07/2023 19:03:59</div>
<div class="t num r" style="right:696px;top:680px;">14/07/2023 19:03:59</div>
<svg class="ic" style="left:81px;top:701px" width="14" height="18" viewBox="0 0 14 18"><path d="M1.5 1.5 h6.8 l3.7 3.7 v11.3 h-10.5 z" fill="#fff" stroke="#505050" stroke-width="1"/><path d="M8.3 1.5 v3.7 h3.7" fill="none" stroke="#505050" stroke-width="1"/></svg>
<div class="t" style="left:102px;top:700px;">Fedora-Workstation-Live-43-1.6.x86_64.iso</div>
<div class="t" style="left:415px;top:700px;">Nouveau fichier à copier</div>
<div class="t num r" style="right:1037px;top:700px;">2 677 920 Ko</div>
<div class="t num r" style="right:957px;top:700px;">n/a</div>
<div class="t num r" style="right:826px;top:700px;">01/11/2025 16:25:25</div>
<div class="t num r" style="right:696px;top:700px;">n/a</div>
<svg class="ic" style="left:81px;top:721px" width="14" height="18" viewBox="0 0 14 18"><path d="M1.5 1.5 h6.8 l3.7 3.7 v11.3 h-10.5 z" fill="#fff" stroke="#505050" stroke-width="1"/><path d="M8.3 1.5 v3.7 h3.7" fill="none" stroke="#505050" stroke-width="1"/></svg>
<div class="t" style="left:102px;top:720px;">ubuntu-25.10-desktop-amd64.iso</div>
<div class="t" style="left:415px;top:720px;">Nouveau fichier à copier</div>
<div class="t num r" style="right:1037px;top:720px;">5 568 868 Ko</div>
<div class="t num r" style="right:957px;top:720px;">n/a</div>
<div class="t num r" style="right:826px;top:720px;">20/10/2025 19:02:14</div>
<div class="t num r" style="right:696px;top:720px;">n/a</div>
<svg class="ic" style="left:48px;top:745px" width="6" height="10" viewBox="0 0 6 10"><path d="M0.5 1 L5 5 L0.5 9 Z" fill="#333"/></svg>
<svg class="ic" style="left:59px;top:743px" width="18" height="16" viewBox="0 0 18 16"><path d="M1.2 2.6 Q1.2 1.2 2.6 1.2 h3.4 l1.5 1.5 h9.5 v1 h-15.6 z" fill="#6b6b6b"/><path d="M1.2 5 h15.8 v8.6 q0 1.1 -1.1 1.1 h-13.6 q-1.1 0 -1.1 -1.1 z" fill="#e8b35a"/></svg>
<div class="t" style="left:82px;top:740px;">MAO</div>
<svg class="ic" style="left:48px;top:765px" width="6" height="10" viewBox="0 0 6 10"><path d="M0.5 1 L5 5 L0.5 9 Z" fill="#333"/></svg>
<svg class="ic" style="left:59px;top:763px" width="18" height="16" viewBox="0 0 18 16"><path d="M1.2 2.6 Q1.2 1.2 2.6 1.2 h3.4 l1.5 1.5 h9.5 v1 h-15.6 z" fill="#6b6b6b"/><path d="M1.2 5 h15.8 v8.6 q0 1.1 -1.1 1.1 h-13.6 q-1.1 0 -1.1 -1.1 z" fill="#e8b35a"/></svg>
<div class="t" style="left:82px;top:760px;">Microsoft</div>
<svg class="ic" style="left:44px;top:785px" width="8" height="8" viewBox="0 0 8 8"><path d="M7 1 L7 7 L1 7 Z" fill="#333"/></svg>
<svg class="ic" style="left:59px;top:783px" width="18" height="16" viewBox="0 0 18 16"><path d="M1 2.2 Q1 1 2.2 1 h3.6 l1.6 1.6 h7.6 v2.6 h-11.6 l-1.4 9.8 h-1.8 z" fill="#6b6b6b"/><path d="M3.6 5.6 h13.6 l-1 9.4 h-13.8 z" fill="#e8b35a"/><path d="M3.6 5.6 h13.6" stroke="#f6e2b8" stroke-width="0.8"/></svg>
<div class="t red strike" style="left:82px;top:780px;">Ubuntu</div>
<div class="t" style="left:415px;top:780px;">Répertoire manquant à supprimer</div>
<svg class="ic" style="left:81px;top:801px" width="14" height="18" viewBox="0 0 14 18"><path d="M1.5 1.5 h6.8 l3.7 3.7 v11.3 h-10.5 z" fill="#fff" stroke="#505050" stroke-width="1"/><path d="M8.3 1.5 v3.7 h3.7" fill="none" stroke="#505050" stroke-width="1"/></svg>
<div class="t red strike" style="left:102px;top:800px;">ubuntu-24.04-desktop-amd64.iso</div>
<div class="t" style="left:415px;top:800px;">Fichier manquant à supprimer</div>
<div class="t num r" style="right:1037px;top:800px;">n/a</div>
<div class="t num r" style="right:957px;top:800px;">5 971 344 Ko</div>
<div class="t num r" style="right:826px;top:800px;">n/a</div>
<div class="t num r" style="right:696px;top:800px;">18/05/2024 00:08:37</div>
<svg class="ic" style="left:44px;top:825px" width="8" height="8" viewBox="0 0 8 8"><path d="M7 1 L7 7 L1 7 Z" fill="#333"/></svg>
<svg class="ic" style="left:59px;top:823px" width="18" height="16" viewBox="0 0 18 16"><path d="M1 2.2 Q1 1 2.2 1 h3.6 l1.6 1.6 h7.6 v2.6 h-11.6 l-1.4 9.8 h-1.8 z" fill="#6b6b6b"/><path d="M3.6 5.6 h13.6 l-1 9.4 h-13.8 z" fill="#e8b35a"/><path d="M3.6 5.6 h13.6" stroke="#f6e2b8" stroke-width="0.8"/></svg>
<div class="t" style="left:82px;top:820px;">Utilitaires</div>
<svg class="ic" style="left:64px;top:845px" width="8" height="8" viewBox="0 0 8 8"><path d="M7 1 L7 7 L1 7 Z" fill="#333"/></svg>
<svg class="ic" style="left:79px;top:843px" width="18" height="16" viewBox="0 0 18 16"><path d="M1 2.2 Q1 1 2.2 1 h3.6 l1.6 1.6 h7.6 v2.6 h-11.6 l-1.4 9.8 h-1.8 z" fill="#6b6b6b"/><path d="M3.6 5.6 h13.6 l-1 9.4 h-13.8 z" fill="#e8b35a"/><path d="M3.6 5.6 h13.6" stroke="#f6e2b8" stroke-width="0.8"/></svg>
<div class="t" style="left:102px;top:840px;">CloneSpy</div>
<svg class="ic" style="left:101px;top:861px" width="14" height="18" viewBox="0 0 14 18"><path d="M1.5 1.5 h6.8 l3.7 3.7 v11.3 h-10.5 z" fill="#fff" stroke="#505050" stroke-width="1"/><path d="M8.3 1.5 v3.7 h3.7" fill="none" stroke="#505050" stroke-width="1"/></svg>
<div class="t" style="left:122px;top:860px;">CloneSpy.ini</div>
<div class="t" style="left:415px;top:860px;">Fichier plus récent à copier</div>
<div class="t num r" style="right:1037px;top:860px;">2 Ko</div>
<div class="t num r" style="right:957px;top:860px;">1 Ko</div>
<div class="t num r" style="right:826px;top:860px;">16/08/2025 00:31:15</div>
<div class="t num r" style="right:696px;top:860px;">21/08/2015 17:32:02</div>
<svg class="ic" style="left:101px;top:881px" width="14" height="18" viewBox="0 0 14 18"><path d="M1.5 1.5 h6.8 l3.7 3.7 v11.3 h-10.5 z" fill="#fff" stroke="#505050" stroke-width="1"/><path d="M8.3 1.5 v3.7 h3.7" fill="none" stroke="#505050" stroke-width="1"/></svg>
<div class="t" style="left:122px;top:880px;">CloneSpy.log</div>
<div class="t" style="left:415px;top:880px;">Fichier plus récent à copier</div>
<div class="t num r" style="right:1037px;top:880px;">1 624 Ko</div>
<div class="t num r" style="right:957px;top:880px;">1 613 Ko</div>
<div class="t num r" style="right:826px;top:880px;">16/08/2025 00:30:43</div>
<div class="t num r" style="right:696px;top:880px;">21/08/2015 17:28:26</div>
<svg class="ic" style="left:64px;top:905px" width="8" height="8" viewBox="0 0 8 8"><path d="M7 1 L7 7 L1 7 Z" fill="#333"/></svg>
<svg class="ic" style="left:79px;top:903px" width="18" height="16" viewBox="0 0 18 16"><path d="M1 2.2 Q1 1 2.2 1 h3.6 l1.6 1.6 h7.6 v2.6 h-11.6 l-1.4 9.8 h-1.8 z" fill="#6b6b6b"/><path d="M3.6 5.6 h13.6 l-1 9.4 h-13.8 z" fill="#e8b35a"/><path d="M3.6 5.6 h13.6" stroke="#f6e2b8" stroke-width="0.8"/></svg>
<div class="t" style="left:102px;top:900px;">Divers</div>
<svg class="ic" style="left:101px;top:921px" width="14" height="18" viewBox="0 0 14 18"><path d="M1.5 1.5 h6.8 l3.7 3.7 v11.3 h-10.5 z" fill="#fff" stroke="#505050" stroke-width="1"/><path d="M8.3 1.5 v3.7 h3.7" fill="none" stroke="#505050" stroke-width="1"/></svg>
<div class="t red strike" style="left:122px;top:920px;">md5.exe</div>
<div class="t" style="left:415px;top:920px;">Fichier manquant à supprimer</div>
<div class="t num r" style="right:1037px;top:920px;">n/a</div>
<div class="t num r" style="right:957px;top:920px;">42 Ko</div>
<div class="t num r" style="right:826px;top:920px;">n/a</div>
<div class="t num r" style="right:696px;top:920px;">05/01/1999 16:03:00</div>
<div class="b" style="left:1676px;top:600px;width:17px;height:341px;background:#f0f0f0;"></div>
<div class="b" style="left:1677px;top:601px;width:15px;height:15px;border:1px solid #a8a8a8;background:#fff;"></div>
<svg class="ic" style="left:1680px;top:605px" width="9" height="6" viewBox="0 0 9 6"><path d="M0.5 5.5 L4.5 1 L8.5 5.5 Z" fill="#333"/></svg>
<div class="b" style="left:1677px;top:617px;width:15px;height:21px;border:1px solid #a8a8a8;background:#fff;"></div>
<div class="b" style="left:1677px;top:925px;width:15px;height:15px;border:1px solid #a8a8a8;background:#fff;"></div>
<svg class="ic" style="left:1680px;top:930px" width="9" height="6" viewBox="0 0 9 6"><path d="M0.5 0.5 L4.5 5 L8.5 0.5 Z" fill="#333"/></svg>
<div class="b" style="left:1419px;top:957px;width:130px;height:25px;border:1px solid #adadad;background:#fbfbfb;"></div>
<div class="t bold" style="left:1419px;top:960px;width:130px;text-align:center;letter-spacing:-0.2px">Comparer</div>
<div class="b" style="left:1564px;top:957px;width:130px;height:25px;border:1px solid #adadad;background:#fbfbfb;"></div>
<div class="t bold" style="left:1564px;top:960px;width:130px;text-align:center;letter-spacing:-0.2px">Synchroniser</div>
</body></html>
